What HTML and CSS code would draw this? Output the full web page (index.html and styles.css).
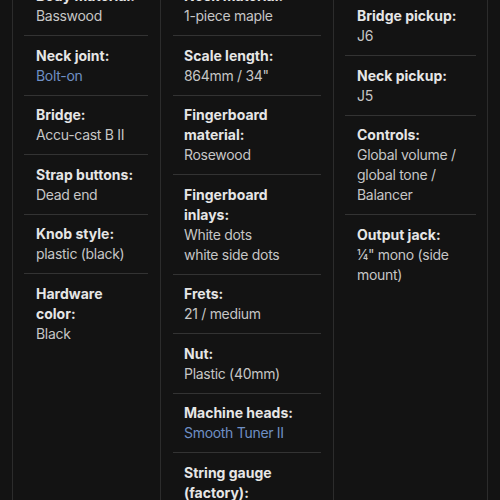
FILE: index.html
```html
<!DOCTYPE html>
<html lang="en">
<head>
    <meta charset="UTF-8">
    <meta name="viewport" content="width=device-width, initial-scale=1.0">
    <title>Bass specifications</title>
    <link rel="stylesheet" href="styles.css">
</head>
<body>

<div class="specs">
    <div class="spec-col">
        <div class="spec"><div class="label">Body shape:</div><div class="value">Jazz Bass</div></div>
        <div class="spec"><div class="label">Body material:</div><div class="value">Basswood</div></div>
        <div class="spec"><div class="label">Neck joint:</div><div class="value"><a href="#">Bolt-on</a></div></div>
        <div class="spec"><div class="label">Bridge:</div><div class="value">Accu-cast B II</div></div>
        <div class="spec"><div class="label">Strap buttons:</div><div class="value">Dead end</div></div>
        <div class="spec"><div class="label">Knob style:</div><div class="value">plastic (black)</div></div>
        <div class="spec"><div class="label">Hardware color:</div><div class="value">Black</div></div>
    </div>
    <div class="spec-col">
        <div class="spec"><div class="label">Neck shape:</div><div class="value">C</div></div>
        <div class="spec"><div class="label">Neck material:</div><div class="value">1-piece maple</div></div>
        <div class="spec"><div class="label">Scale length:</div><div class="value">864mm / 34"</div></div>
        <div class="spec"><div class="label">Fingerboard material:</div><div class="value">Rosewood</div></div>
        <div class="spec"><div class="label">Fingerboard inlays:</div><div class="value">White dots<br>white side dots</div></div>
        <div class="spec"><div class="label">Frets:</div><div class="value">21 / medium</div></div>
        <div class="spec"><div class="label">Nut:</div><div class="value">Plastic (40mm)</div></div>
        <div class="spec"><div class="label">Machine heads:</div><div class="value"><a href="#">Smooth Tuner II</a></div></div>
        <div class="spec"><div class="label">String gauge (factory):</div><div class="value">.045-.105</div></div>
    </div>
    <div class="spec-col">
        <div class="spec"><div class="label">Pickups:</div><div class="value">2 single coil<br>(passive)</div></div>
        <div class="spec"><div class="label">Bridge pickup:</div><div class="value">J6</div></div>
        <div class="spec"><div class="label">Neck pickup:</div><div class="value">J5</div></div>
        <div class="spec"><div class="label">Controls:</div><div class="value">Global volume / global tone / Balancer</div></div>
        <div class="spec"><div class="label">Output jack:</div><div class="value">¼" mono (side mount)</div></div>
    </div>
</div>

</body>
</html>
```

FILE: styles.css
```css
body { margin: 0; background-color: #131313; font-family: Inter, "Noto Sans", sans-serif; font-size: 14px; line-height: 20px; overflow: hidden; }
.specs { display: grid; grid-template-columns: 148px 173px 155px; margin-top: -83px; padding-left: 12px; min-height: 600px; }
.spec-col { border-left: 1px solid #2c2c2c; padding: 0 12px 0 11px; }
.spec-col:nth-child(2) { padding-left: 12px; }
.spec-col:last-child { border-right: 1px solid #2c2c2c; padding-right: 11px; }
.spec { padding: 9.5px 12px 9px; border-bottom: 1px solid #333; }
.spec-col:nth-child(2) .spec { padding-left: 11px; }
.spec:last-child { border-bottom: none; }
.label { color: #e6e6e6; font-weight: 700; }
.value { color: #c6c6c6; letter-spacing: -0.3px; }
.value a { color: #6f8fc4; text-decoration: none; }
```
